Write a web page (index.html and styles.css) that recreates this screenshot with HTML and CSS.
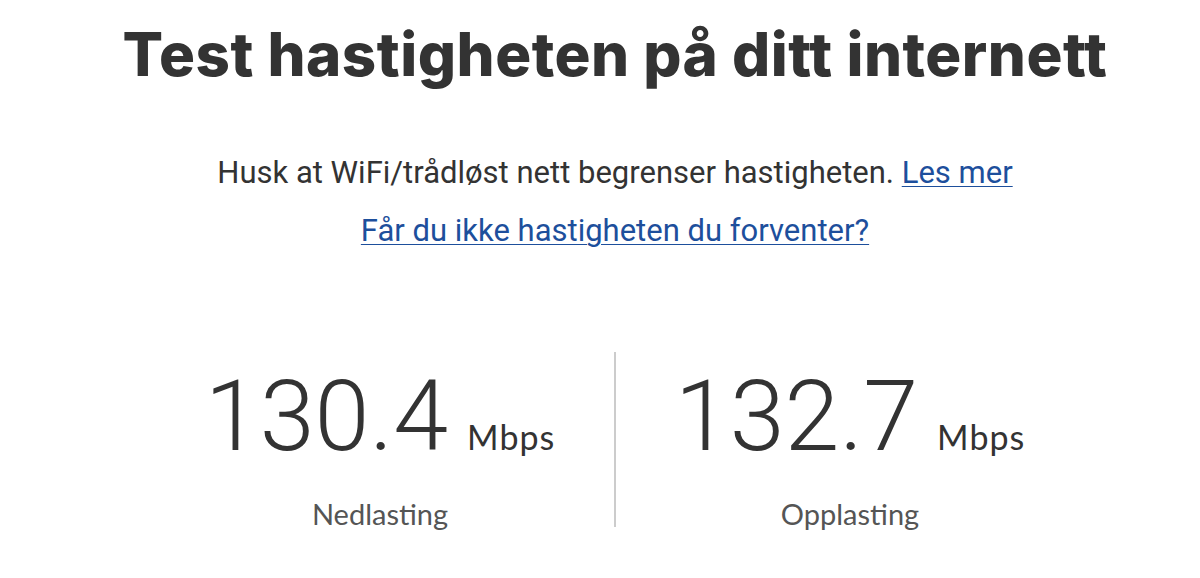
FILE: index.html
```html
<!DOCTYPE html>
<html lang="no">
<head>
    <meta charset="UTF-8">
    <meta name="viewport" content="width=device-width, initial-scale=1.0">
    <title>Hastighetstest</title>
    <link rel="stylesheet" href="styles.css">
</head>
<body>
    <main class="speedtest">
        <h1 class="title">Test hastigheten på ditt internett</h1>
        <p class="notice">Husk at WiFi/trådløst nett begrenser hastigheten. <a href="#">Les mer</a></p>
        <p class="notice"><a href="#">Får du ikke hastigheten du forventer?</a></p>

        <div class="results">
            <div class="result">
                <div class="value">
                    <span class="number">130.4</span>
                    <span class="unit">Mbps</span>
                </div>
                <div class="label">Nedlasting</div>
            </div>
            <div class="divider"></div>
            <div class="result">
                <div class="value">
                    <span class="number">132.7</span>
                    <span class="unit">Mbps</span>
                </div>
                <div class="label">Opplasting</div>
            </div>
        </div>
    </main>
</body>
</html>
```

FILE: styles.css
```css
body {
    margin: 0;
    background-color: #fff;
    color: #333;
    font-family: "Lato", "Noto Sans", sans-serif;
}
.speedtest {
    padding-left: 30px;
    text-align: center;
}
.title {
    margin: 0;
    padding-top: 18px;
    font-family: "Inter", "Lato", sans-serif;
    font-weight: 800;
    font-size: 60px;
    line-height: 72px;
    color: #333;
    letter-spacing: 0.5px;
}
.notice {
    margin: 0;
    font-family: "Roboto", sans-serif;
    font-size: 31px;
    line-height: 58px;
    color: #333;
}
.notice:first-of-type {
    margin-top: 54px;
}
.notice a {
    color: #1d4f9c;
    text-decoration: underline;
    text-underline-offset: 3px;
    text-decoration-thickness: 1px;
}
.results {
    display: flex;
    justify-content: center;
    margin-top: 92px;
}
.result {
    width: 468px;
    display: flex;
    flex-direction: column;
    align-items: center;
    padding-top: 9px;
}
.value {
    display: flex;
    align-items: baseline;
    gap: 19px;
}
.number {
    font-family: "Roboto", sans-serif;
    font-weight: 300;
    font-size: 99px;
    line-height: 110px;
    color: #333;
}
.unit {
    font-family: "Lato", sans-serif;
    font-size: 34px;
    letter-spacing: 1px;
    color: #333;
}
.label {
    margin-top: 25px;
    font-family: "Lato", sans-serif;
    font-size: 29px;
    color: #555;
}
.divider {
    width: 2px;
    height: 175px;
    background-color: #ccc;
}
```
